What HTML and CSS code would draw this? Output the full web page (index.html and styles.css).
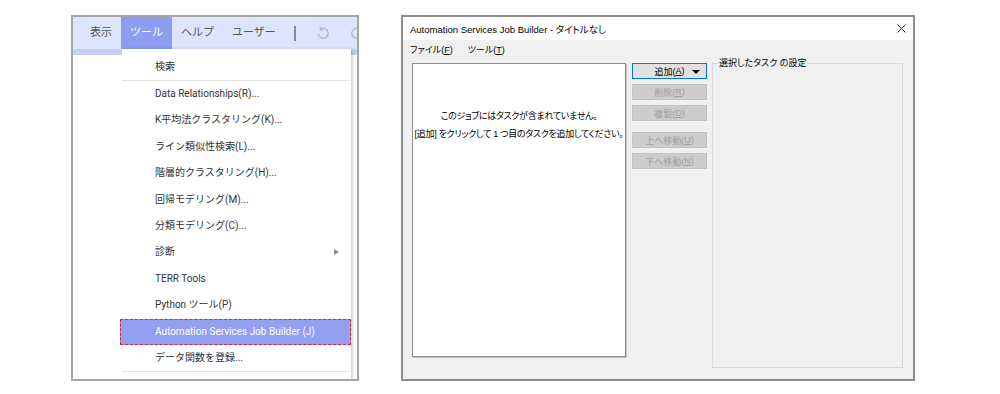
FILE: index.html
```html
<!DOCTYPE html>
<html>
    <head>
        <meta charset="utf8">
        <title>ツール メニュー</title>
        <link rel="stylesheet" href="styles.css">
    </head>
    <body>
        <div class="stage">
            <div class="spotfire">
                <div class="menubar">
                    <span class="mb_item">表示</span>
                    <span class="mb_item active">ツール</span>
                    <span class="mb_item">ヘルプ</span>
                    <span class="mb_item">ユーザー</span>
                    <span class="mb_sep"></span>
                    <svg class="mb_icon" width="14" height="14" viewBox="0 0 14 14"><path d="M4.2 3.2 A5 5 0 1 1 2.2 8" fill="none" stroke="#b3bad0" stroke-width="1.4"/><path d="M4.6 0.8 L4.2 3.6 L7 4.2" fill="none" stroke="#b3bad0" stroke-width="1.4"/></svg>
                    <svg class="mb_icon redo" width="14" height="14" viewBox="0 0 14 14"><path d="M9.8 3.2 A5 5 0 1 0 11.8 8" fill="none" stroke="#b3bad0" stroke-width="1.4"/></svg>
                </div>
                <div class="band"></div>
                <div class="dropdown">
                    <div class="dd_item first">検索</div>
                    <div class="dd_sep"></div>
                    <div class="dd_item">Data Relationships(R)...</div>
                    <div class="dd_item">K平均法クラスタリング(K)...</div>
                    <div class="dd_item">ライン類似性検索(L)...</div>
                    <div class="dd_item">階層的クラスタリング(H)...</div>
                    <div class="dd_item">回帰モデリング(M)...</div>
                    <div class="dd_item">分類モデリング(C)...</div>
                    <div class="dd_item sub">診断</div>
                    <div class="dd_item">TERR Tools</div>
                    <div class="dd_item">Python ツール(P)</div>
                    <div class="dd_item selected">Automation Services Job Builder (J)</div>
                    <div class="dd_item">データ関数を登録...</div>
                    <div class="dd_sep"></div>
                </div>
            </div>

            <div class="window">
                <div class="titlebar">
                    <span>Automation Services Job Builder - タイトルなし</span>
                    <svg width="9" height="9" viewBox="0 0 9 9"><path d="M0.5 0.5 L8.5 8.5 M8.5 0.5 L0.5 8.5" stroke="#222" stroke-width="1"/></svg>
                </div>
                <div class="win_menu">
                    <span>ファイル(<u>F</u>)</span>
                    <span>ツール(<u>T</u>)</span>
                </div>
                <div class="win_body">
                    <div class="listbox">
                        <div class="empty_msg">
                            このジョブにはタスクが含まれていません。<br>
                            [追加] をクリックして 1 つ目のタスクを追加してください。
                        </div>
                    </div>
                    <div class="buttons">
                        <div class="btn primary">追加(<u>A</u>)<span class="caret"></span></div>
                        <div class="btn">削除(<u>R</u>)</div>
                        <div class="btn">複製(<u>D</u>)</div>
                        <div class="btn spaced">上へ移動(<u>U</u>)</div>
                        <div class="btn">下へ移動(<u>N</u>)</div>
                    </div>
                    <fieldset class="groupbox">
                        <legend>選択したタスク の設定</legend>
                    </fieldset>
                </div>
            </div>
        </div>
    </body>
</html>
```

FILE: styles.css
```css
body{
    margin:0;
    background:#fff;
}
.stage{
    display:flex;
    align-items:flex-start;
    gap:42px;
    padding:15px 0 0 71px;
}

/* left: spotfire tools menu */
.spotfire{
    position:relative;
    flex:none;
    width:288px;
    height:366px;
    box-sizing:border-box;
    border:2px solid #a6a6a6;
    overflow:hidden;
    background:#fff;
    font-family:Roboto, "Noto Sans CJK JP", sans-serif;
}
.menubar{
    display:flex;
    align-items:center;
    height:32px;
    padding-left:8px;
    background:#dce5fb;
    white-space:nowrap;
}
.menubar > *{
    flex:none;
}
.mb_item{
    padding:0 9px;
    font-size:11px;
    line-height:32px;
    color:#555;
}
.mb_item.active{
    background:#8e9df1;
    color:#fff;
}
.mb_sep{
    width:2px;
    height:15px;
    margin-left:9px;
    background:#8a8a8a;
}
.mb_icon{
    margin-left:20px;
}
.mb_icon.redo{
    margin-left:20px;
}
.band{
    height:6px;
    background:#c3cff4;
}
.dropdown{
    position:absolute;
    left:49px;
    top:32px;
    bottom:0;
    width:229px;
    padding-top:5px;
    background:#fff;
    box-shadow:2px 0 3px rgba(0,0,0,0.18);
    font-size:10px;
    color:#333;
}
.dd_item{
    position:relative;
    height:26.4px;
    line-height:26.4px;
    padding-left:33px;
    box-sizing:border-box;
    white-space:nowrap;
}
.dd_item.first{
    height:26px;
    line-height:26px;
}
.dd_sep{
    height:1px;
    background:#e3e3e3;
}
.dd_item.sub::after{
    content:"";
    position:absolute;
    right:12px;
    top:50%;
    margin-top:-4px;
    border-left:5px solid #8a8a8a;
    border-top:3.5px solid transparent;
    border-bottom:3.5px solid transparent;
}
.dd_item.selected{
    margin-left:-2px;
    padding-left:35px;
    background:#939ff0;
    color:#fff;
    outline:1px dashed #e0242e;
    outline-offset:-1px;
}

/* right: job builder window */
.window{
    flex:none;
    width:514px;
    height:366px;
    box-sizing:border-box;
    border:2px solid #8c8c8c;
    background:#f0f0f0;
    display:flex;
    flex-direction:column;
    font-family:"Liberation Sans", "Noto Sans CJK JP", sans-serif;
    font-feature-settings:"palt";
    color:#000;
}
.titlebar{
    height:23px;
    flex:none;
    display:flex;
    align-items:center;
    justify-content:space-between;
    padding:0 7px;
    background:#fff;
    font-size:9.5px;
}
.win_menu{
    height:18px;
    flex:none;
    display:flex;
    align-items:center;
    gap:15px;
    padding-left:7px;
    font-size:9px;
}
.win_body{
    display:flex;
    align-items:flex-start;
    padding:5px 0 0 9px;
}
.listbox{
    width:214px;
    height:294px;
    box-sizing:border-box;
    background:#fff;
    border:1px solid #8f8f8f;
    box-shadow:1px 1px 0 #c4c4c4;
}
.empty_msg{
    padding-top:43px;
    text-align:center;
    font-size:9px;
    line-height:18px;
    letter-spacing:-0.3px;
}
.buttons{
    width:75px;
    margin-left:6px;
    display:flex;
    flex-direction:column;
    gap:5px;
}
.btn{
    position:relative;
    height:16px;
    box-sizing:border-box;
    display:flex;
    align-items:center;
    justify-content:center;
    background:#cccccc;
    border:1px solid #c2c2c2;
    color:#a0a0a0;
    font-size:9px;
}
.btn.primary{
    background:#e1e1e1;
    border-color:#0078d7;
    color:#000;
}
.btn.spaced{
    margin-top:6px;
}
.caret{
    position:absolute;
    right:6px;
    top:6px;
    border-top:4px solid #000;
    border-left:4px solid transparent;
    border-right:4px solid transparent;
}
.groupbox{
    width:191px;
    height:310px;
    box-sizing:border-box;
    margin:-5px 0 0 5px;
    padding:0;
    border:1px solid #dcdcdc;
    min-inline-size:0;
}
.groupbox legend{
    margin-left:5px;
    padding:0 1px;
    font-size:9px;
    line-height:11px;
}
```
